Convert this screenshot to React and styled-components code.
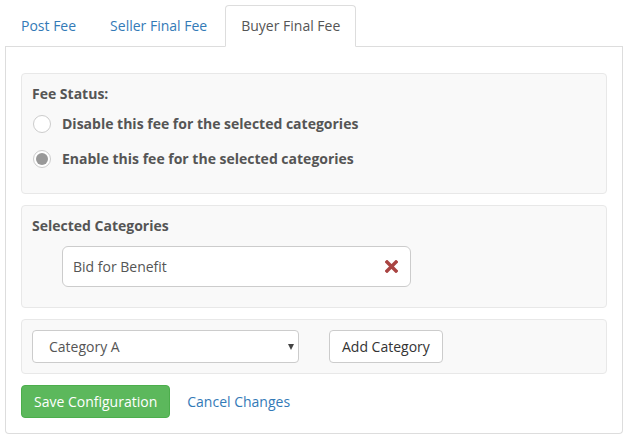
import React, { useState } from 'react';
import styled, { createGlobalStyle } from 'styled-components';

const GlobalStyle = createGlobalStyle`
  body {
    margin: 0;
    background: #fff;
    font-family: 'Open Sans', 'Liberation Sans', sans-serif;
    font-size: 14px;
    line-height: 20px;
    color: #555;
  }
  * { box-sizing: border-box; }
`;

const Page = styled.div`
  padding: 5px 6px 5px 5px;
`;

const TabBar = styled.ul`
  display: flex;
  margin: 0;
  padding: 0;
  list-style: none;
  border-bottom: 1px solid #ddd;
`;

const Tab = styled.li`
  margin: 0 2px -1px 0;
  padding: 10px 15px;
  line-height: 20px;
  border: 1px solid ${(p) => (p.$active ? '#ddd' : 'transparent')};
  border-bottom-color: ${(p) => (p.$active ? '#fff' : 'transparent')};
  border-radius: 4px 4px 0 0;
  background: ${(p) => (p.$active ? '#fff' : 'transparent')};
  color: ${(p) => (p.$active ? '#555' : '#337ab7')};
  cursor: pointer;
`;

const Panel = styled.div`
  border: 1px solid #ddd;
  border-top: none;
  border-radius: 0 0 4px 4px;
  padding: 26px 15px 15px;
`;

const Well = styled.div`
  background: #f9f9f9;
  border: 1px solid #e8e8e8;
  border-radius: 4px;
  padding: 10px 10px ${(p) => p.$bottom || 10}px;
  margin-bottom: ${(p) => p.$gap || 11}px;
`;

const Heading = styled.div`
  font-weight: 700;
  color: #555;
`;

const RadioRow = styled.label`
  display: flex;
  align-items: center;
  height: 20px;
  margin-top: ${(p) => p.$top}px;
  font-weight: 700;
  cursor: pointer;
`;

const Radio = styled.span`
  width: 18px;
  height: 18px;
  margin: 0 11px 0 1px;
  border: 1px solid #ccc;
  border-radius: 50%;
  background: #fff;
  display: flex;
  align-items: center;
  justify-content: center;
  &::after {
    content: '';
    width: 12px;
    height: 12px;
    border-radius: 50%;
    background: ${(p) => (p.$checked ? '#999' : 'transparent')};
  }
`;

const Tag = styled.div`
  display: flex;
  align-items: center;
  justify-content: space-between;
  width: 349px;
  height: 41px;
  margin: 10px 0 10px 30px;
  padding: 0 12px 0 10px;
  background: #fff;
  border: 1px solid #ccc;
  border-radius: 6px;
`;

const Remove = styled.button`
  display: flex;
  padding: 0;
  border: none;
  background: none;
  cursor: pointer;
`;

const AddRow = styled.div`
  display: flex;
  gap: 30px;
`;

const SelectWrap = styled.div`
  position: relative;
  width: 267px;
  &::after {
    content: '';
    position: absolute;
    right: 5px;
    top: 14px;
    border-left: 3px solid transparent;
    border-right: 3px solid transparent;
    border-top: 6px solid #444;
    pointer-events: none;
  }
`;

const Select = styled.select`
  appearance: none;
  width: 100%;
  height: 33px;
  padding: 0 20px 0 16px;
  font: inherit;
  color: #555;
  background: #fff;
  border: 1px solid #ccc;
  border-radius: 4px;
`;

const Button = styled.button`
  height: 33px;
  padding: 0 12px;
  font: inherit;
  color: ${(p) => (p.$primary ? '#fff' : '#333')};
  background: ${(p) => (p.$primary ? '#5cb85c' : '#fff')};
  border: 1px solid ${(p) => (p.$primary ? '#4cae4c' : '#ccc')};
  border-radius: 4px;
  cursor: pointer;
`;

const Actions = styled.div`
  display: flex;
  align-items: center;
  gap: 17px;
`;

const Link = styled.a`
  color: #337ab7;
  text-decoration: none;
  cursor: pointer;
`;

const tabs = ['Post Fee', 'Seller Final Fee', 'Buyer Final Fee'];

const App = () => {
  const [tab, setTab] = useState(2);
  const [enabled, setEnabled] = useState(true);

  return (
    <Page>
      <GlobalStyle />
      <TabBar>
        {tabs.map((t, i) => (
          <Tab key={t} $active={tab === i} onClick={() => setTab(i)}>
            {t}
          </Tab>
        ))}
      </TabBar>
      <Panel>
        <Well $bottom={24}>
          <Heading>Fee Status:</Heading>
          <RadioRow $top={10} onClick={() => setEnabled(false)}>
            <Radio $checked={!enabled} />
            Disable this fee for the selected categories
          </RadioRow>
          <RadioRow $top={15} onClick={() => setEnabled(true)}>
            <Radio $checked={enabled} />
            Enable this fee for the selected categories
          </RadioRow>
        </Well>
        <Well>
          <Heading>Selected Categories</Heading>
          <Tag>
            <span>Bid for Benefit</span>
            <Remove aria-label='remove'>
              <svg width='13' height='13' viewBox='0 0 13 13'>
                <path d='M2 2 L11 11 M11 2 L2 11' stroke='#a94442' strokeWidth='3.4' strokeLinecap='square' />
              </svg>
            </Remove>
          </Tag>
        </Well>
        <Well>
          <AddRow>
            <SelectWrap>
              <Select defaultValue='a'>
                <option value='a'>Category A</option>
                <option value='b'>Category B</option>
              </Select>
            </SelectWrap>
            <Button>Add Category</Button>
          </AddRow>
        </Well>
        <Actions>
          <Button $primary>Save Configuration</Button>
          <Link>Cancel Changes</Link>
        </Actions>
      </Panel>
    </Page>
  );
};

export default App;
